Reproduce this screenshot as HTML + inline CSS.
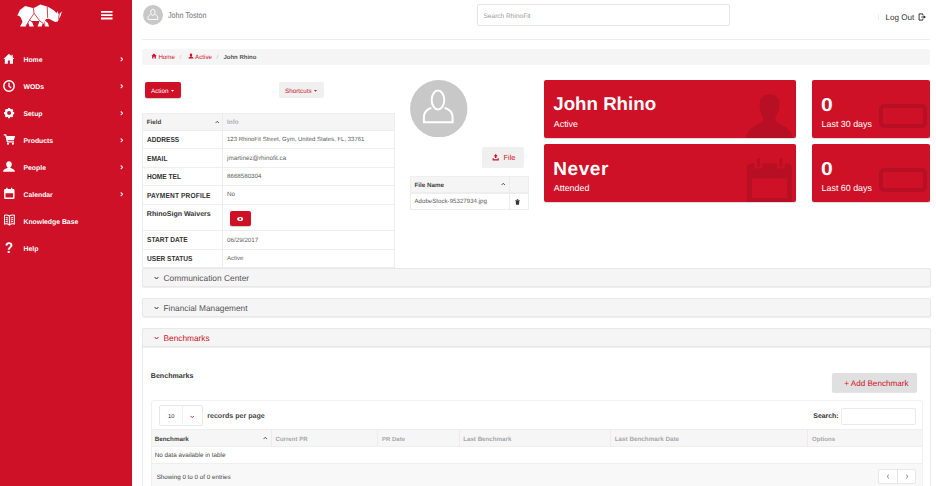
<!DOCTYPE html>
<html lang="en">
<head>
<meta charset="utf-8">
<title>RhinoFit - John Rhino</title>
<style>
*{box-sizing:border-box;margin:0;padding:0}
html,body{width:936px;height:486px;overflow:hidden;background:#fff}
body{font-family:"Liberation Sans",sans-serif;color:#333;position:relative;font-size:7px;text-rendering:geometricPrecision}
.abs,.abs-all *{position:absolute}
a{text-decoration:none;color:inherit}
/* sidebar */
#sidebar{position:absolute;left:0;top:0;width:132px;height:486px;background:#ce1126}
#sidebar .item{position:absolute;left:0;width:132px;height:27px;color:#fff;font-size:6.85px;font-weight:bold}
#sidebar .item .lbl{position:absolute;left:23.5px;top:10px;line-height:9px;white-space:nowrap}
#sidebar .item svg.ic{position:absolute;left:2px;top:6px;width:14px;height:14px}
#sidebar .item svg.ch{position:absolute;left:119.6px;top:11px;width:3.6px;height:4.6px}
/* top bar */
#topbar{position:absolute;left:132px;top:0;width:804px;height:41px}
#topline{position:absolute;left:142px;top:39px;width:788px;height:1px;background:#ededed}
.t{position:absolute;white-space:nowrap;line-height:1}
/* breadcrumb */
#crumb{position:absolute;left:142px;top:48.5px;width:788px;height:16px;background:#f5f5f5;border-radius:2px}
.btn{position:absolute;border-radius:2px;text-align:center;white-space:nowrap}
.red{background:#ce1126;color:#fff}
/* tables */
.tbl{position:absolute;border:1px solid #eeeeee;background:#fff}
.row{position:absolute;left:0;right:0;border-top:1px solid #eeeeee}
.hd{background:#f5f5f6;border:1px solid #eeeeee !important}
.card{position:absolute;background:#ce1126;border-radius:2px;color:#fff;overflow:hidden;box-shadow:0 1px 1px rgba(0,0,0,.15)}
.panelh{position:absolute;left:142px;width:788.5px;height:19px;background:#f5f5f5;border:1px solid #e8e8e8;border-radius:2px;box-shadow:0 1px 1px rgba(0,0,0,.07)}
</style>
</head>
<body>

<!-- ============ SIDEBAR ============ -->
<div id="sidebar">
  <svg style="position:absolute;left:12px;top:0;width:60px;height:32px" viewBox="0 0 911 486">
    <path fill="#fff" d="M80 238 L120 150 L200 92 L318 122 L338 118 L430 68 L545 102 L640 160 L676 200 L688 168 L700 200 L716 218 L756 172 L744 232 L712 288 L695 326 L655 334 L560 286 L520 290 L500 312 L545 350 L562 404 L500 404 L490 370 L470 350 L450 404 L388 404 L418 318 L296 318 L304 334 L332 404 L265 404 L245 340 L210 404 L122 404 L160 330 L130 262 L105 238 Z"/>
    <path stroke="#ce1126" stroke-width="12" fill="none" d="M322 116 L336 202 L266 304 L212 394 M336 202 L420 316 L470 352 M266 304 L304 330 M535 96 L542 274 M716 214 L708 292"/>
    <path stroke="#ce1126" stroke-width="8" fill="none" d="M492 330 L500 404"/>
  </svg>
  <svg style="position:absolute;left:101.200px;top:11.250px;width:12px;height:9px" viewBox="0 0 12 9"><path fill="#fff" d="M0 0h11.5v1.8H0zM0 3.3h11.5v1.8H0zM0 6.6h11.5v1.8H0z"/></svg>

  <div class="item" style="top:46px">
    <svg class="ic" viewBox="0 0 14 14"><path fill="#fff" d="M6.900 1.700 L1.500 6.900 H2.800 V11.800 H5.900 V8.500 H7.900 V11.800 H11 V6.900 H12.300 L10.700 5.350 V2.800 H9.500 V4.200 Z"/></svg>
    <span class="lbl">Home</span>
    <svg class="ch" viewBox="0 0 3.6 4.6"><path d="M.7 .5 L2.700 2.300 L.7 4.100" stroke="#fde4e7" stroke-width="1.150" fill="none"/></svg>
  </div>
  <div class="item" style="top:73px">
    <svg class="ic" viewBox="0 0 14 14"><circle cx="7" cy="7" r="5.2" fill="none" stroke="#fff" stroke-width="1.5"/><path d="M7 3.8 V7.2 L9.2 9" stroke="#fff" stroke-width="1.3" fill="none"/></svg>
    <span class="lbl">WODs</span>
    <svg class="ch" viewBox="0 0 3.6 4.6"><path d="M.7 .5 L2.700 2.300 L.7 4.100" stroke="#fde4e7" stroke-width="1.150" fill="none"/></svg>
  </div>
  <div class="item" style="top:100px">
    <svg class="ic" style="left:2.8px;top:6.600px;width:12.2px;height:12.2px" viewBox="0 0 14 14"><circle cx="7" cy="7" r="3.6" fill="none" stroke="#fff" stroke-width="2.6"/><g stroke="#fff" stroke-width="2.4"><path d="M7 1.2V3M7 11V12.8M1.2 7H3M11 7H12.8M2.9 2.9L4.2 4.2M9.8 9.8L11.1 11.1M2.9 11.1L4.2 9.8M9.8 4.2L11.1 2.9"/></g></svg>
    <span class="lbl">Setup</span>
    <svg class="ch" viewBox="0 0 3.6 4.6"><path d="M.7 .5 L2.700 2.300 L.7 4.100" stroke="#fde4e7" stroke-width="1.150" fill="none"/></svg>
  </div>
  <div class="item" style="top:127px">
    <svg class="ic" style="left:2.55px;top:5.600px;width:13.1px;height:12.600px" preserveAspectRatio="none" viewBox="0 0 14 14"><path fill="#fff" d="M0.8 1.5 H3.4 L4 3.2 H13 L11.6 8 H5 L5.3 9.2 H11.8 V10.5 H4.2 L2.4 2.8 H0.8 Z"/><circle cx="5.4" cy="12" r="1.2" fill="#fff"/><circle cx="10.6" cy="12" r="1.2" fill="#fff"/></svg>
    <span class="lbl">Products</span>
    <svg class="ch" viewBox="0 0 3.6 4.6"><path d="M.7 .5 L2.700 2.300 L.7 4.100" stroke="#fde4e7" stroke-width="1.150" fill="none"/></svg>
  </div>
  <div class="item" style="top:154px">
    <svg class="ic" style="top:5.800px;height:13px" preserveAspectRatio="none" viewBox="0 0 14 14"><path fill="#fff" d="M7 1.3 C9 1.3 9.8 2.8 9.8 4.5 C9.8 6 9.2 7.2 8.5 7.8 V8.6 C10.5 9.2 12.8 10 13 12.6 H1 C1.2 10 3.5 9.2 5.5 8.6 V7.8 C4.8 7.2 4.2 6 4.2 4.5 C4.2 2.8 5 1.3 7 1.3 Z"/></svg>
    <span class="lbl">People</span>
    <svg class="ch" viewBox="0 0 3.6 4.6"><path d="M.7 .5 L2.700 2.300 L.7 4.100" stroke="#fde4e7" stroke-width="1.150" fill="none"/></svg>
  </div>
  <div class="item" style="top:181px">
    <svg class="ic" style="left:2.900px;top:6px;width:12.600px;height:13px" preserveAspectRatio="none" viewBox="0 0 14 14"><path fill="#fff" fill-rule="evenodd" d="M2.600 2.200 H11.400 Q12.800 2.200 12.800 3.600 V11.600 Q12.800 13 11.400 13 H2.600 Q1.200 13 1.200 11.600 V3.600 Q1.200 2.200 2.600 2.200 Z M2.800 6.800 V11.400 H11.200 V6.800 Z"/><rect x="3.600" y=".8" width="1.500" height="2.600" fill="#fff"/><rect x="8.900" y=".8" width="1.500" height="2.600" fill="#fff"/></svg>
    <span class="lbl">Calendar</span>
    <svg class="ch" viewBox="0 0 3.6 4.6"><path d="M.7 .5 L2.700 2.300 L.7 4.100" stroke="#fde4e7" stroke-width="1.150" fill="none"/></svg>
  </div>
  <div class="item" style="top:208px">
    <svg class="ic" style="left:2.700px;top:5.300px;width:12.800px;height:14px" preserveAspectRatio="none" viewBox="0 0 14 14"><path fill="none" stroke="#fff" stroke-width="1.1" d="M7 3 C5.5 2 3.5 1.8 1.6 2.2 V11 C3.5 10.6 5.5 10.8 7 12 C8.5 10.8 10.5 10.6 12.4 11 V2.2 C10.5 1.8 8.5 2 7 3 Z M7 3 V12 M3 4.5 L5.6 5 M3 6.5 L5.6 7 M3 8.5 L5.6 9 M11 4.5 L8.4 5 M11 6.5 L8.4 7 M11 8.5 L8.4 9"/></svg>
    <span class="lbl">Knowledge Base</span>
  </div>
  <div class="item" style="top:235px">
    <span class="t" style="left:4.800px;top:5.500px;font-size:15.500px;font-weight:bold;transform:scaleX(.85);transform-origin:0 0">?</span>
    <span class="lbl">Help</span>
  </div>
</div>

<!-- ============ TOP BAR ============ -->
<svg class="abs" style="left:143.400px;top:5.400px;width:20px;height:20px" viewBox="0 0 57.5 57.5"><circle cx="28.750" cy="28.750" r="28.700" fill="#c8c8c8"/><g fill="none" stroke="#fff" stroke-width="2.600"><ellipse cx="28.500" cy="21" rx="6.300" ry="8.800"/><path d="M21.500 28 C16.500 29.500 14.500 32.500 14.500 37 V41.500 H42.500 V37 C42.500 32.500 40.500 29.500 35.500 28"/></g></svg>
<span class="t" style="left:168.3px;top:12.00px;font-size:8.2px;color:#707070;transform:scaleX(.875);transform-origin:0 0">John Toston</span>
<div class="abs" style="left:477px;top:4.300px;width:253px;height:22.200px;border:1px solid #e6e6e6;border-radius:2px;background:#fff"></div>
<span class="t" style="left:483.5px;top:14.00px;font-size:6.55px;color:#999">Search RhinoFit</span>
<span class="t" style="left:885.5px;top:14.00px;font-size:8.1px;color:#333">Log Out</span>
<svg class="abs" style="left:918.400px;top:13px;width:8px;height:8px" viewBox="0 0 8 8"><path fill="none" stroke="#222" stroke-width=".9" d="M4.800 2.300 V.9 H1.100 V7.100 H4.800 V5.700 M3.300 4 H7.200"/><path fill="#222" d="M5.600 2.300 L7.700 4 L5.600 5.700Z"/></svg>
<div class="abs" style="left:878px;top:14px;width:1px;height:6px;background:#ededed"></div>
<div id="topline"></div>

<!-- ============ BREADCRUMB ============ -->
<div id="crumb"></div>
<svg class="abs" style="left:151px;top:53px;width:6px;height:6px" viewBox="0 0 14 14"><path fill="#ce1126" d="M7 1.2 L0.8 7 H2.6 V12.6 H5.7 V8.8 H8.3 V12.6 H11.4 V7 H13.2 Z"/></svg>
<span class="t" style="left:158.40px;top:54.60px;font-size:6.2px;color:#ce1126">Home</span>
<span class="t" style="left:179.5px;top:54.60px;font-size:6px;color:#bbb">/</span>
<svg class="abs" style="left:187.5px;top:53px;width:6px;height:6px" viewBox="0 0 14 14"><path fill="#ce1126" d="M7 1.3 C9 1.3 9.8 2.8 9.8 4.5 C9.8 6 9.2 7.2 8.5 7.8 V8.6 C10.5 9.2 12.8 10 13 12.6 H1 C1.2 10 3.5 9.2 5.5 8.6 V7.8 C4.8 7.2 4.2 6 4.2 4.5 C4.2 2.8 5 1.3 7 1.3 Z"/></svg>
<span class="t" style="left:195.10px;top:54.60px;font-size:6.2px;color:#ce1126">Active</span>
<span class="t" style="left:216.5px;top:54.60px;font-size:6px;color:#bbb">/</span>
<span class="t" style="left:223.40px;top:54.60px;font-size:6px;font-weight:bold;color:#555">John Rhino</span>

<!-- ============ ACTION BUTTONS ============ -->
<div class="btn red" style="left:145px;top:82px;width:36px;height:16px;box-shadow:0 1px 1px rgba(0,0,0,.2)"></div>
<span class="t" style="left:151px;top:88.50px;font-size:6.3px;color:#fff">Action</span>
<svg class="abs" style="left:171px;top:89.5px;width:3px;height:2px" viewBox="0 0 3 2"><path fill="#fff" d="M0 0H3L1.5 1.800Z"/></svg>
<div class="btn" style="left:279px;top:82px;width:45px;height:16px;background:#f0f0f0"></div>
<span class="t" style="left:285px;top:88.50px;font-size:6.3px;color:#ce1126">Shortcuts</span>
<svg class="abs" style="left:313.5px;top:89.5px;width:3px;height:2px" viewBox="0 0 3 2"><path fill="#ce1126" d="M0 0H3L1.5 1.800Z"/></svg>

<!-- ============ INFO TABLE ============ -->
<div class="tbl" style="left:142px;top:113px;width:253px;height:155px">
  <div class="row hd" style="top:-1px;left:-1px;right:-1px;height:18px;border-top:0"></div>
  <div class="row" style="top:34px;height:1px"></div>
  <div class="row" style="top:52.7px;height:1px"></div>
  <div class="row" style="top:71px;height:1px"></div>
  <div class="row" style="top:89.5px;height:1px"></div>
  <div class="row" style="top:115.800px;height:1px"></div>
  <div class="row" style="top:134.700px;height:1px"></div>
  <div class="abs" style="left:79px;top:-1px;width:1px;height:155px;background:#ececec"></div>
</div>
<span class="t" style="left:146.8px;top:120.30px;font-size:6.2px;font-weight:bold;color:#444">Field</span>
<svg class="abs" style="left:214.5px;top:120px;width:4.5px;height:4px" viewBox="0 0 5 4"><path d="M0.6 3.200 L2.5 1.200 L4.4 3.200" stroke="#444" stroke-width="1" fill="none"/></svg>
<span class="t" style="left:227px;top:120.30px;font-size:6.400px;font-weight:bold;color:#b0b0b0">Info</span>

<span class="t" style="left:146.8px;top:135.50px;font-size:7.2px;font-weight:bold;color:#333;transform:scaleX(.915);transform-origin:0 0">ADDRESS</span>
<span class="t" style="left:227px;top:136.50px;font-size:6px;color:#5c5c5c">123 RhinoFit Street, Gym, United States, FL, 33761</span>
<span class="t" style="left:146.8px;top:155.30px;font-size:7.2px;font-weight:bold;color:#333;transform:scaleX(.915);transform-origin:0 0">EMAIL</span>
<span class="t" style="left:227px;top:156.00px;font-size:6.3px;color:#5c5c5c">jmartinez@rhinofit.ca</span>
<span class="t" style="left:146.8px;top:172.70px;font-size:7.2px;font-weight:bold;color:#333;transform:scaleX(.915);transform-origin:0 0">HOME TEL</span>
<span class="t" style="left:227px;top:174.00px;font-size:6.2px;color:#5c5c5c">8668580304</span>
<span class="t" style="left:146.8px;top:191.80px;font-size:7.2px;font-weight:bold;color:#333;letter-spacing:.16px;transform:scaleX(.915);transform-origin:0 0">PAYMENT PROFILE</span>
<span class="t" style="left:227px;top:192.00px;font-size:6.3px;color:#5c5c5c">No</span>
<span class="t" style="left:146.8px;top:210.70px;font-size:7.05px;font-weight:bold;color:#333">RhinoSign Waivers</span>
<div class="btn red" style="left:229.7px;top:211px;width:21.2px;height:15.2px;box-shadow:0 1px 1px rgba(0,0,0,.2)"></div>
<svg class="abs" style="left:237px;top:216.800px;width:6.400px;height:4px" viewBox="0 0 6.4 4"><ellipse cx="3.200" cy="2" rx="3.100" ry="1.900" fill="#fff"/><circle cx="3.200" cy="2" r="1.050" fill="#ce1126"/></svg>
<span class="t" style="left:146.8px;top:235.50px;font-size:7.2px;font-weight:bold;color:#333;transform:scaleX(.915);transform-origin:0 0">START DATE</span>
<span class="t" style="left:227px;top:238.00px;font-size:6.25px;color:#5c5c5c">06/29/2017</span>
<span class="t" style="left:146.8px;top:254.50px;font-size:7.2px;font-weight:bold;color:#333;transform:scaleX(.915);transform-origin:0 0">USER STATUS</span>
<span class="t" style="left:227px;top:255.80px;font-size:6px;color:#5c5c5c">Active</span>

<!-- ============ AVATAR + FILES ============ -->
<svg class="abs" style="left:410px;top:79.5px;width:57.500px;height:57.500px" viewBox="0 0 57.5 57.5"><circle cx="28.750" cy="28.750" r="28.700" fill="#c8c8c8"/><g fill="none" stroke="#fff" stroke-width="2"><ellipse cx="28" cy="20" rx="6.300" ry="9.400"/><path d="M21.300 27.800 C16.500 29.500 13.900 32.500 13.900 37.500 V42.200 H42.600 V37.500 C42.600 32.500 40 29.500 34.700 27.800"/></g></svg>

<div class="btn" style="left:482.200px;top:147px;width:41.500px;height:20.8px;background:#f0f0f0"></div>
<svg class="abs" style="left:492px;top:154.200px;width:7.4px;height:6.800px" viewBox="0 0 7 7"><path fill="#ce1126" d="M3.5 0 L5.6 2.2 H4.3 V4.2 H2.7 V2.2 H1.4 Z M0.3 4.4 H1.5 V5.4 H5.5 V4.400 H6.7 V6.7 H0.3 Z"/></svg>
<span class="t" style="left:503.5px;top:153.800px;font-size:7.4px;color:#ce1126">File</span>

<div class="tbl" style="left:410px;top:175.500px;width:119px;height:34.5px">
  <div class="row hd" style="top:-1px;left:-1px;right:-1px;height:17.500px;border-top:0"></div>
  <div class="row" style="top:16px;height:1px"></div>
  <div class="abs" style="left:98.2px;top:-1px;width:1px;height:34.5px;background:#ececec"></div>
</div>
<span class="t" style="left:414.5px;top:182.80px;font-size:6.25px;font-weight:bold;color:#444">File Name</span>
<svg class="abs" style="left:500.500px;top:182.400px;width:4.5px;height:4px" viewBox="0 0 5 4"><path d="M0.6 3.200 L2.5 1.200 L4.4 3.200" stroke="#444" stroke-width="1" fill="none"/></svg>
<span class="t" style="left:414.5px;top:198.800px;font-size:6.15px;color:#5c5c5c">AdobeStock-95327934.jpg</span>
<svg class="abs" style="left:514.7px;top:198.500px;width:5px;height:6px" viewBox="0 0 5 6"><path fill="#333" d="M0.3 0.9 H1.7 V0.3 H3.3 V0.9 H4.7 V1.7 H0.3 Z M0.7 2.1 H4.3 L4 5.8 H1 Z"/></svg>

<!-- ============ STAT CARDS ============ -->
<div class="card" style="left:544px;top:80px;width:252.300px;height:58px"></div>
<svg class="abs" style="left:740px;top:90px;width:56px;height:48px" viewBox="740 90 56 48"><path fill="#b70f23" d="M769.5 94.200 C776 94.200 779.3 98 779.3 104 C779.3 110 777.5 114 775.4 117 L775.4 121.500 C780 124.500 791 127 792.9 138 L745.8 138 C747.7 127 758.5 124.500 762.9 121.500 L762.9 117 C761 114 759.6 110 759.6 104 C759.6 98 763 94.200 769.5 94.200 Z"/></svg>
<span class="t" style="left:553.300px;top:95px;font-size:18.7px;font-weight:bold;color:#fff">John Rhino</span>
<span class="t" style="left:553.800px;top:119.500px;font-size:8.9px;color:#fff">Active</span>

<div class="card" style="left:544px;top:144px;width:252.300px;height:58px"></div>
<svg class="abs" style="left:740px;top:154px;width:56px;height:48px" viewBox="740 154 56 48"><path fill="#b70f23" fill-rule="evenodd" d="M751.800 163.400 H754.500 V168.500 H762.500 V163.400 H776.800 V168.500 H784.800 V163.400 H786.800 Q791.800 163.400 791.800 168.400 V202 H746.800 V168.400 Q746.800 163.400 751.800 163.400 Z M751.700 178.200 H787.200 V197.900 H751.700 Z"/><rect x="757" y="158.200" width="3" height="8.800" fill="#b70f23"/><rect x="779.300" y="158.200" width="3" height="8.800" fill="#b70f23"/></svg>
<span class="t" style="left:553.300px;top:159.50px;font-size:19px;font-weight:bold;color:#fff;letter-spacing:.55px">Never</span>
<span class="t" style="left:553.800px;top:183.500px;font-size:8.9px;color:#fff">Attended</span>

<div class="card" style="left:812px;top:80px;width:118px;height:58px">
  <div class="abs" style="left:66.600px;top:24.400px;width:48.800px;height:24px;border:4.400px solid #b70f23;border-radius:5px"></div>
</div>
<span class="t" style="left:821.300px;top:95.50px;font-size:18.7px;font-weight:bold;color:#fff;transform:scaleX(1.13);transform-origin:0 0">0</span>
<span class="t" style="left:821.600px;top:119.500px;font-size:8.9px;color:#fff">Last 30 days</span>

<div class="card" style="left:812px;top:144px;width:118px;height:58px">
  <div class="abs" style="left:66.600px;top:24.400px;width:48.800px;height:24px;border:4.400px solid #b70f23;border-radius:5px"></div>
</div>
<span class="t" style="left:821.300px;top:159.50px;font-size:18.7px;font-weight:bold;color:#fff;transform:scaleX(1.13);transform-origin:0 0">0</span>
<span class="t" style="left:821.600px;top:183.500px;font-size:8.9px;color:#fff">Last 60 days</span>

<!-- ============ ACCORDION PANELS ============ -->
<div class="panelh" style="top:268px"></div>
<svg class="abs" style="left:153.500px;top:275.800px;width:5px;height:4px" viewBox="0 0 5 4"><path d="M0.6 1 L2.5 3 L4.4 1" stroke="#333" stroke-width="1" fill="none"/></svg>
<span class="t" style="left:163.5px;top:273.500px;font-size:8.4px;color:#555">Communication Center</span>

<div class="panelh" style="top:298px"></div>
<svg class="abs" style="left:153.500px;top:305.800px;width:5px;height:4px" viewBox="0 0 5 4"><path d="M0.6 1 L2.5 3 L4.4 1" stroke="#333" stroke-width="1" fill="none"/></svg>
<span class="t" style="left:163.5px;top:303.500px;font-size:8.3px;color:#555">Financial Management</span>

<div class="abs" style="left:142px;top:328px;width:788.500px;height:170px;border:1px solid #ebebeb;border-radius:2px;background:#fff"></div>
<div class="panelh" style="top:328px"></div>
<svg class="abs" style="left:153.500px;top:335.800px;width:5px;height:4px" viewBox="0 0 5 4"><path d="M0.6 1 L2.5 3 L4.4 1" stroke="#ce1126" stroke-width="1" fill="none"/></svg>
<span class="t" style="left:163.5px;top:333.500px;font-size:8.3px;color:#ce1126">Benchmarks</span>

<span class="t" style="left:150.800px;top:373.25px;font-size:7.1px;font-weight:bold;color:#333">Benchmarks</span>
<div class="btn" style="left:832.3px;top:373px;width:85.2px;height:19px;background:#e0e0e0;box-shadow:0 1px 1px rgba(0,0,0,.12)"></div>
<span class="t" style="left:844.200px;top:379.80px;font-size:8.15px;color:#ce1126">+ Add Benchmark</span>

<!-- datatable -->
<div class="abs" style="left:150.5px;top:400px;width:772.500px;height:100px;border:1px solid #f1f1f1;border-radius:3px;background:#fff"></div>
<div class="abs" style="left:159.3px;top:405.300px;width:43.5px;height:21px;border:1px solid #e8e8e8;border-radius:2px;background:#fff"></div>
<div class="abs" style="left:181.800px;top:406px;width:1px;height:19.500px;background:#f0f0f0"></div>
<span class="t" style="left:168px;top:415.30px;font-size:5.8px;color:#333">10</span>
<svg class="abs" style="left:189.700px;top:414.500px;width:4.500px;height:3.500px" viewBox="0 0 5 4"><path d="M0.6 1 L2.5 3 L4.4 1" stroke="#ce1126" stroke-width="1" fill="none"/></svg>
<span class="t" style="left:207.200px;top:412.50px;font-size:7.1px;font-weight:bold;color:#444">records per page</span>
<span class="t" style="left:813.3px;top:413.75px;font-size:6.9px;font-weight:bold;color:#333">Search:</span>
<div class="abs" style="left:841.2px;top:408.200px;width:74.5px;height:16.600px;border:1px solid #eaeaea;border-radius:2px;background:#fff"></div>

<div class="abs" style="left:151.5px;top:429px;width:770.500px;height:18px;background:#f6f6f7;border-top:1px solid #efefef;border-bottom:1px solid #efefef"></div>
<span class="t" style="left:154.800px;top:436.80px;font-size:6.25px;font-weight:bold;color:#444">Benchmark</span>
<svg class="abs" style="left:263px;top:436.200px;width:4.500px;height:4px" viewBox="0 0 5 4"><path d="M0.6 3.200 L2.5 1.200 L4.4 3.200" stroke="#444" stroke-width="1" fill="none"/></svg>
<span class="t" style="left:275.500px;top:436.80px;font-size:6.1px;font-weight:bold;color:#a8a8a8">Current PR</span>
<span class="t" style="left:382px;top:436.80px;font-size:6px;font-weight:bold;color:#a8a8a8">PR Date</span>
<span class="t" style="left:463.200px;top:436.80px;font-size:6.2px;font-weight:bold;color:#a8a8a8">Last Benchmark</span>
<span class="t" style="left:614.700px;top:436.80px;font-size:6.3px;font-weight:bold;color:#a8a8a8">Last Benchmark Date</span>
<span class="t" style="left:812px;top:436.80px;font-size:6.1px;font-weight:bold;color:#a8a8a8">Options</span>
<div class="abs" style="left:271px;top:430px;width:1px;height:17px;background:#ececec"></div>
<div class="abs" style="left:377px;top:430px;width:1px;height:17px;background:#ececec"></div>
<div class="abs" style="left:458.500px;top:430px;width:1px;height:17px;background:#ececec"></div>
<div class="abs" style="left:610px;top:430px;width:1px;height:17px;background:#ececec"></div>
<div class="abs" style="left:807.200px;top:430px;width:1px;height:17px;background:#ececec"></div>
<span class="t" style="left:154.800px;top:453.00px;font-size:6.3px;color:#444">No data available in table</span>
<div class="abs" style="left:151.5px;top:462.500px;width:770.500px;height:24px;background:#f8f8f8;border-top:1px solid #efefef"></div>
<span class="t" style="left:156.700px;top:474.55px;font-size:6.25px;color:#444">Showing 0 to 0 of 0 entries</span>
<div class="abs" style="left:878px;top:469.200px;width:37.500px;height:14.500px;border:1px solid #e8e8e8;border-radius:2px;background:#fff"></div>
<div class="abs" style="left:896.500px;top:469.200px;width:1px;height:14.500px;background:#e4e4e4"></div>
<svg class="abs" style="left:886px;top:473.800px;width:4px;height:5px" viewBox="0 0 4 5"><path d="M3 0.6 L1 2.5 L3 4.4" stroke="#555" stroke-width="0.7" fill="none"/></svg>
<svg class="abs" style="left:904.500px;top:473.800px;width:4px;height:5px" viewBox="0 0 4 5"><path d="M1 0.6 L3 2.5 L1 4.4" stroke="#555" stroke-width="0.7" fill="none"/></svg>

</body>
</html>
